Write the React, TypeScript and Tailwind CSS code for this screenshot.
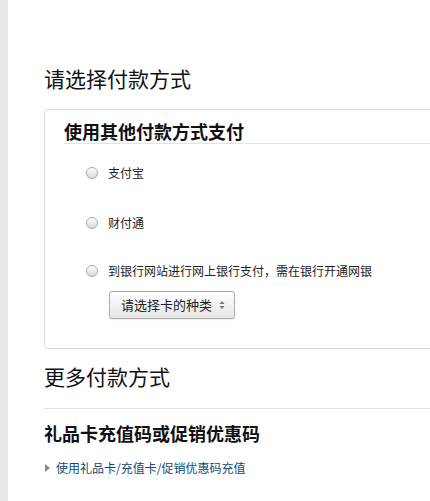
import React from 'react';

const font = { fontFamily: '"Noto Sans CJK SC", "Liberation Sans", sans-serif' };

function Radio() {
  return (
    <span className="inline-block h-[12px] w-[12px] shrink-0 rounded-full border border-[#a8a8a8] bg-gradient-to-b from-[#fdfdfd] to-[#d9d9d9] shadow-[inset_0_1px_1px_rgba(255,255,255,0.9)]" />
  );
}

function Option({ label }: { label: string }) {
  return (
    <div className="ml-[22px] flex h-[20px] items-center gap-[10px]">
      <Radio />
      <span className="text-[12px] leading-[20px] text-[#222]">{label}</span>
    </div>
  );
}

export default function App() {
  return (
    <div className="flex h-[501px] w-[430px] overflow-hidden bg-white" style={font}>
      <div className="w-[8px] shrink-0 bg-[#e9e9e9]" />
      <main className="flex-1 pl-[36px] pt-[64px]">
        <h1 className="text-[21px] leading-[28px] text-[#111] whitespace-nowrap">请选择付款方式</h1>

        <section className="mt-[17px] w-[420px] rounded-[4px] border border-[#dcdcdc] pl-[19px] pt-[10px] pb-[29px]">
          <h2 className="border-b border-[#e2e2e2] text-[18px] font-bold leading-[23px] text-[#111] whitespace-nowrap">
            使用其他付款方式支付
          </h2>
          <div className="mt-[19px]">
            <Option label="支付宝" />
          </div>
          <div className="mt-[30px]">
            <Option label="财付通" />
          </div>
          <div className="mt-[28px]">
            <Option label="到银行网站进行网上银行支付，需在银行开通网银" />
          </div>
          <button className="ml-[45px] mt-[10px] flex h-[28px] w-[126px] items-center justify-between rounded-[3px] border border-[#a9a9a9] bg-gradient-to-b from-white to-[#e6e6e6] pl-[11px] pr-[9px] text-[13px] text-[#222] shadow-[0_1px_1px_rgba(0,0,0,0.08)]">
            <span>请选择卡的种类</span>
            <svg width="6" height="10" viewBox="0 0 6 10" className="fill-[#777]">
              <path d="M3 1 L5.5 4 H0.5 Z" />
              <path d="M3 9 L5.5 6 H0.5 Z" />
            </svg>
          </button>
        </section>

        <h1 className="mt-[13px] text-[21px] leading-[28px] text-[#111] whitespace-nowrap">更多付款方式</h1>
        <div className="mt-[18px] w-[420px] border-t border-[#e2e2e2]" />

        <h2 className="mt-[12px] text-[18px] font-bold leading-[24px] text-[#111] whitespace-nowrap">礼品卡充值码或促销优惠码</h2>
        <div className="mt-[14px] flex h-[18px] items-center">
          <svg width="5" height="8" viewBox="0 0 5 8" className="ml-[1px] fill-[#888]">
            <path d="M0 0 L5 4 L0 8 Z" />
          </svg>
          <a href="#" className="ml-[6px] text-[12px] leading-[18px] text-[#0f4a72]">
            使用礼品卡/充值卡/促销优惠码充值
          </a>
        </div>
      </main>
    </div>
  );
}
